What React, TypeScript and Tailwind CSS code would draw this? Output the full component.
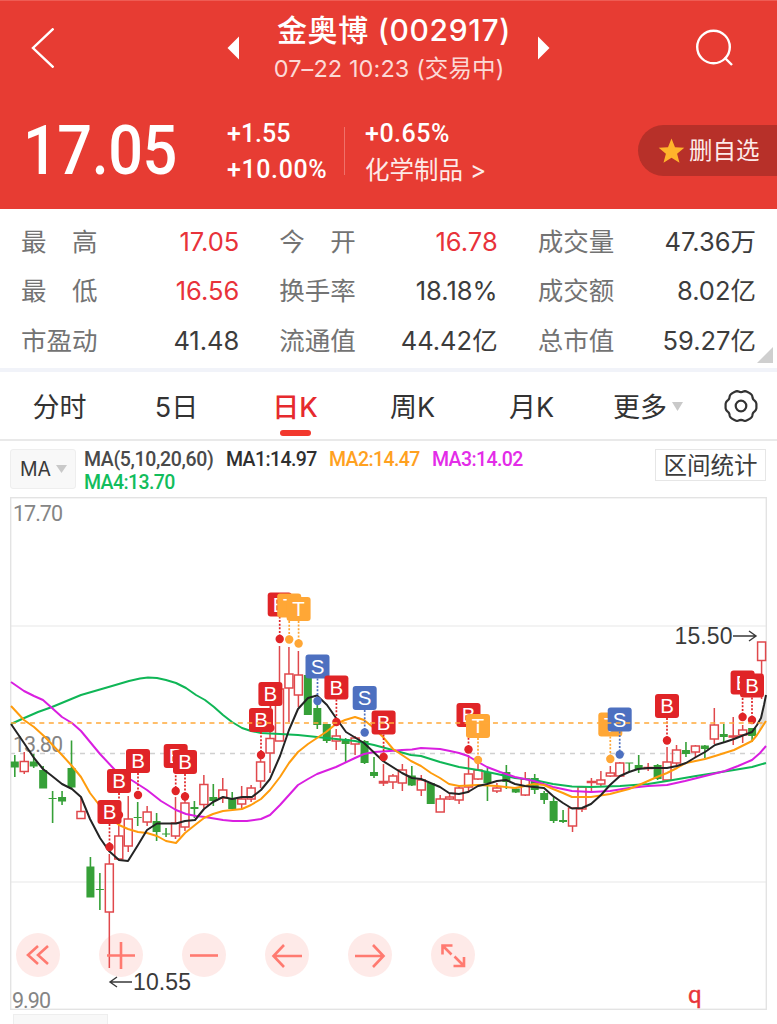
import { type ReactNode } from "react";

type Candle = [color: "r" | "g", top: number, bottom: number, high: number, low: number];

const FIRST_X = 14.8;
const STEP = 9.453;

// body top, body bottom, wick top, wick bottom
const candles: Candle[] = [
  ["g", 761.5, 767.5, 755, 777],
  ["r", 761.5, 771.5, 752, 774],
  ["g", 761.5, 766.5, 754, 768],
  ["g", 770, 788.5, 766, 788],
  ["g", 798, 799, 791, 823],
  ["g", 797, 801.5, 791, 805],
  ["g", 768, 787.5, 740.5, 788],
  ["r", 811.5, 818.5, 797, 818],
  ["g", 866.5, 897.5, 857, 897],
  ["g", 889, 890, 873, 910],
  ["r", 864, 912, 854, 968],
  ["r", 836, 859, 820, 859],
  ["r", 819, 846, 796, 852],
  ["g", 817, 818, 802, 826],
  ["r", 812, 822, 806, 826],
  ["g", 821, 832, 813, 841],
  ["g", 833.5, 834.5, 828, 837],
  ["r", 823, 836, 797, 839],
  ["r", 803, 827, 795, 831],
  ["g", 807, 809, 801, 818],
  ["r", 784.5, 804.5, 775, 808],
  ["g", 797, 801, 784, 806],
  ["r", 790, 798, 778, 803],
  ["g", 798, 809, 792, 809],
  ["r", 799, 804, 786, 809],
  ["r", 788, 799, 785, 802],
  ["r", 762, 781, 755, 788],
  ["r", 738.5, 753, 730, 773],
  ["r", 689, 741, 646, 741],
  ["r", 674, 688, 647, 722],
  ["r", 675, 695, 651, 707],
  ["g", 675, 715, 675, 715],
  ["g", 708, 725, 705, 729],
  ["g", 724, 741, 724, 743],
  ["r", 736, 741, 729, 750],
  ["g", 739, 744, 738, 762],
  ["r", 738, 744, 736, 755],
  ["g", 741, 763, 740, 764],
  ["g", 772, 776, 757, 778],
  ["r", 781.5, 783, 764, 786],
  ["r", 776, 782, 774, 789],
  ["r", 770, 783, 764, 791],
  ["g", 775.5, 785.5, 766, 786],
  ["r", 780, 790, 775, 796],
  ["g", 783, 804, 783, 804],
  ["r", 799, 812, 795, 812],
  ["r", 797, 799, 793, 800],
  ["r", 788, 800, 786, 804],
  ["r", 774, 787, 755, 793],
  ["r", 770, 779, 763, 780],
  ["g", 772, 783, 768, 801],
  ["r", 788, 791, 783, 793],
  ["g", 772, 782, 765, 789],
  ["g", 788.5, 792.5, 787, 793],
  ["r", 779, 795, 772, 796],
  ["g", 778, 790, 774, 794],
  ["g", 793, 800, 791, 804],
  ["g", 801, 821, 797, 823],
  ["g", 820, 822, 810, 823],
  ["r", 808, 826, 808, 832],
  ["r", 787, 809, 787, 812],
  ["r", 781.5, 782.5, 778, 791],
  ["r", 780, 784, 771, 786],
  ["r", 773, 776, 766, 777],
  ["r", 763, 776, 762, 776],
  ["g", 762.5, 763.5, 763, 772],
  ["g", 765, 769, 755, 773],
  ["r", 767.5, 768.5, 763, 771],
  ["g", 765, 779, 764, 780],
  ["r", 762, 780, 747, 780],
  ["r", 750, 763, 745, 766],
  ["g", 750, 754, 742, 757],
  ["r", 746, 752, 745, 757],
  ["g", 745.5, 749, 745, 758],
  ["r", 725, 739, 708, 744],
  ["g", 734, 737, 724, 743],
  ["r", 736, 737, 717, 745],
  ["r", 730, 735, 725, 743],
  ["g", 728, 736, 728, 742],
  ["r", 642, 660.5, 642, 699],
];

const averages = [
  {
    color: "#0fb656",
    points:
      "11,724 22,719 38,712 52,707 81,695 112,686 129,681 140,678.5 148,677.5 157,678 166,680 176,683 186,688 196,695 205,700 214,707 223,715 232,722 242,728 251,731 261,733 280,734 298,735 317,737 336,739 355,741 374,745 400,752 411,755 421,756 440,762 459,767 478,770 497,774 515,778 534,780 553,784 572,786.5 591,787 620,786 648,784 667,781 696,776 715,773 734,770 752,767 766,763",
  },
  {
    color: "#d91fe0",
    points:
      "11,682 24,691 34,696 43,700 52,708 62,717 72,723 81,731 100,754 115,770 133,781 147,790 161,801 176,810 186,814 196,816 205,817 223,820 233,821 247,821 261,819 270,815 280,805 289,795 298,785 308,779 317,774 336,767 355,758 364,754 374,752 390,751 402,750 412,749.5 421,748 440,749 450,751 459,753 468,756 478,762 487,767 500,772 515,777 534,781 553,787 572,791 591,792 610,791 629,788 648,786 667,785 685,781 705,776 725,771 738,766 752,760 760,753 766,746",
  },
  {
    color: "#ff9c0d",
    points:
      "11,706 24,720 34,727 45,737 62,755 72,766 81,777 90,793 100,806 109,817 119,825 128,829 138,832 147,833 157,836 166,841 176,843 185,833 195,825 204,818 213,814 223,811 242,809 251,805 261,799 270,790 280,777 289,763 298,752 308,744 317,738 326,732 336,724 345,720 355,717 364,720 374,728 383,737 393,749 411,761 421,766 431,773 440,778 449,784 459,786 478,785 497,786 515,788 525,786 534,784 544,785 553,789 563,793 572,797 591,797 610,794 629,789 639,785 648,781 657,777 667,773 677,768 686,763 705,759 715,756 734,750 744,745 752,741 757,735 766,721",
  },
  {
    color: "#242424",
    points:
      "11,724 24,743 34,758 43,769 52,776 62,784 72,789 81,797 90,819 100,838 109,851 119,860 128,861 138,845 147,830 157,823.5 176,823.5 185,821 195,820 204,809 213,802 223,797 232,799 242,797 252,797 261,790 270,779 280,756 289,730 298,709 308,698 317,695.5 327,705 336,718 346,732 364,743 383,761 402,773 412,778 421,779 440,787 449,793 459,794 468,792 478,786 487,784 497,781 506,780 515,784 525,786 534,787 544,788 553,796 563,803 572,808.5 582,808 591,804 601,795 610,785 620,776 629,772 638,769 648,768 667,768 677,766 686,763 696,757 705,752 715,745 725,742 734,739 744,735 752,732 757,725 761,718 764,705 766,695",
  },
];

// letter, badge centre, y of the dot
const marks: [string, number, number, number][] = [
  ["B", 119, 781, 815],
  ["B", 109.5, 812, 847],
  ["B", 138, 761, 795],
  ["B", 175.7, 756, 791],
  ["B", 185, 762, 796.5],
  ["B", 270.4, 694, 728],
  ["B", 261, 720, 755],
  ["B", 279.7, 604.5, 639],
  ["T", 289.2, 605.5, 639.5],
  ["T", 298.6, 609, 643.5],
  ["S", 317.5, 666.5, 701],
  ["B", 336.4, 687.5, 722],
  ["S", 364.7, 698, 732.5],
  ["B", 383.6, 722.5, 757],
  ["B", 468.5, 715, 749.5],
  ["T", 478, 726, 760],
  ["T", 610.3, 724.5, 759],
  ["S", 619.7, 719.5, 754.5],
  ["B", 667, 706, 740.5],
  ["B", 742.6, 682.5, 717],
  ["B", 752, 685.5, 720],
];

const markColor: Record<string, string> = { B: "#e02427", T: "#ffa736", S: "#4d70c0" };

const quotes = [
  ["最　高", "17.05", "up"],
  ["今　开", "16.78", "up"],
  ["成交量", "47.36万", ""],
  ["最　低", "16.56", "up"],
  ["换手率", "18.18%", ""],
  ["成交额", "8.02亿", ""],
  ["市盈动", "41.48", ""],
  ["流通值", "44.42亿", ""],
  ["总市值", "59.27亿", ""],
];

// six-lobed outline of the settings icon
const gearPoints = Array.from({ length: 72 }, (_, i) => {
  const angle = (i * Math.PI) / 36;
  const r = 15 + 0.75 * Math.cos(angle * 6) - 0.35 * Math.cos(angle * 12);
  return `${(17 + r * Math.cos(angle)).toFixed(2)},${(17 + r * Math.sin(angle)).toFixed(2)}`;
}).join(" ");

const Header = () => (
  <header className="h-[209px] bg-[#e73c33] border-t border-[#ee5c54] text-white">
    <div className="flex h-[93px] items-center">
      <svg className="ml-[30px] w-6 h-10 shrink-0" viewBox="0 0 24 40" fill="none" stroke="white" strokeWidth="2.4">
        <path d="M23.5 0.5 3 20 23.5 39.5" />
      </svg>
      <svg className="ml-[173px] w-3 h-6 shrink-0" viewBox="0 0 12 24" fill="white">
        <path d="M12 0.5v23L0.5 12z" />
      </svg>
      <div className="ml-[10px] w-[290px] shrink-0 flex flex-col items-center whitespace-nowrap pt-[2px]">
        <div className="text-[30px] leading-[40px] font-medium tracking-[0.7px]">金奥博 (002917)</div>
        <div className="mr-[10px] text-[23.5px] leading-[38px] tracking-[0.1px] text-[#fcd9d6]">07–22 10:23 (交易中)</div>
      </div>
      <svg className="-ml-[1px] w-3 h-6 shrink-0" viewBox="0 0 12 24" fill="white">
        <path d="M0 0.5v23L11.5 12z" />
      </svg>
      <svg className="ml-[145px] w-10 h-10 shrink-0" viewBox="0 0 40 40" fill="none" stroke="white" strokeWidth="2.4">
        <circle cx="18.5" cy="19" r="16.3" />
        <path d="M29.5 29.5 37 37" />
      </svg>
    </div>
    <div className="flex h-[113px] items-center whitespace-nowrap">
      <div className="pl-[23px] w-[227px] font-[Roboto] font-medium text-[68px] leading-[80px]">
        <span className="inline-block origin-left scale-x-[0.9] tracking-[-0.5px]">17.05</span>
      </div>
      <div className="w-[117px] pt-[2px] text-[25px] leading-[36px] font-[Roboto] font-medium">
        <div>+1.55</div>
        <div className="tracking-[0.6px]">+10.00%</div>
      </div>
      <div className="h-12 w-px bg-[#f0716a]" />
      <div className="ml-5 w-[273px] pt-[2px] leading-[36px]">
        <div className="font-[Roboto] font-medium text-[25px] tracking-[0.5px]">+0.65%</div>
        <div className="text-[24.5px] text-[#fdeae8]">化学制品 &gt;</div>
      </div>
      <div className="flex h-[51px] flex-1 items-center rounded-l-full bg-[#b73029] pl-5">
        <svg className="w-[27px] h-[26px] shrink-0" viewBox="0 0 27 26" fill="#ffb42b">
          <path d="M13.5 0.5 17 9.2l9.3.5-7.2 6 2.4 9.1-8-5.1-8 5.1 2.4-9.1-7.2-6 9.3-.5z" />
        </svg>
        <span className="ml-1 text-[23.5px] text-[#fdebe9]">删自选</span>
      </div>
    </div>
  </header>
);

const Quotes = () => (
  <section className="relative h-[159px] bg-white px-[21px] pt-2">
    <div className="grid grid-cols-3 gap-x-[40px] text-[25.5px] whitespace-nowrap">
      {quotes.map(([label, value, kind]) => (
        <div key={label} className="flex h-[49.5px] items-center justify-between">
          <span className="text-[#737373]">{label}</span>
          <span className={kind === "up" ? "text-[#e8323a]" : "text-[#3c3c3c]"}>{value}</span>
        </div>
      ))}
    </div>
    <svg className="absolute right-1 bottom-[5px] w-4 h-4" viewBox="0 0 16 16" fill="#cfcfcf">
      <path d="M16 0v16H0z" />
    </svg>
  </section>
);

const Tab = ({ children, active }: { children: ReactNode; active?: boolean }) => (
  <div className={`relative flex h-full items-center justify-center ${active ? "font-medium text-[#e62a2e]" : ""}`}>
    {children}
    {active && <span className="absolute -bottom-[1px] h-[6px] w-[31px] rounded-full bg-[#f2382d]" />}
  </div>
);

const Tabs = () => (
  <nav className="h-[73px] border-t-4 border-[#f1f3f9]">
    <div className="grid h-[69px] grid-cols-[119px_115px_122px_113px_125px_110px_1fr] border-b-2 border-[#e9e9e9] pb-1 pt-[10px] text-[27px] text-[#333] whitespace-nowrap">
      <Tab>分时</Tab>
      <Tab>5日</Tab>
      <Tab active>日K</Tab>
      <Tab>周K</Tab>
      <Tab>月K</Tab>
      <div className="flex items-center pl-[19px]">
        更多
        <svg className="ml-[5px] mb-1 w-[11px] h-[9px]" viewBox="0 0 11 9" fill="#c9c9c9">
          <path d="M0 0h11L5.500 9z" />
        </svg>
      </div>
      <svg className="ml-[20px] mt-[7px] w-[34px] h-[34px] self-start" viewBox="0 0 34 34" fill="none" stroke="#333" strokeWidth="2.2">
        <polygon points={gearPoints} strokeLinejoin="round" />
        <circle cx="17" cy="17" r="5.300" />
      </svg>
    </div>
  </nav>
);

const Legend = () => (
  <div className="flex h-[56px] items-start px-[10px] pt-2 whitespace-nowrap">
    <div className="flex h-10 w-[66px] items-center rounded-[3px] border border-[#eee] bg-[#f8f8f8] pl-[9px] pt-[2px] text-[19.5px] text-[#3a3a3a]">
      MA
      <svg className="ml-[5px] mb-[2px] w-[11px] h-[8px]" viewBox="0 0 11 8" fill="#c9c9c9">
        <path d="M0 0h11L5.500 8z" />
      </svg>
    </div>
    <div className="ml-2 -mt-px w-[560px] font-[Roboto] font-medium text-[19.5px] leading-[23px] tracking-[-0.35px]">
      <div className="flex">
        <span className="w-[142px] text-[#4a4a4a]">MA(5,10,20,60)</span>
        <span className="w-[103px] tracking-[-0.6px] text-[#2f2f2f]">MA1:14.97</span>
        <span className="w-[103px] tracking-[-0.6px] text-[#ffa11f]">MA2:14.47</span>
        <span className="tracking-[-0.6px] text-[#e32ce8]">MA3:14.02</span>
      </div>
      <div className="tracking-[-0.6px] text-[#12bd5c]">MA4:13.70</div>
    </div>
    <div className="ml-auto mr-px flex h-8 w-[111px] items-center justify-center border border-[#e6e6e6] pt-[2px] text-[23.5px] text-[#3c3c3c]">
      区间统计
    </div>
  </div>
);

const Chart = () => (
  <svg className="block w-[757px] h-[513px] overflow-visible" viewBox="10 497 757 513" fill="none">
    <path d="M10 626h757M10 882h757" stroke="#f0f0f0" strokeWidth="1.500" />
    <path d="M10 753.500h757" stroke="#d0d0d0" strokeWidth="1.500" strokeDasharray="5 5" />
    <rect x="10.700" y="497.700" width="755.600" height="511.600" stroke="#e3e3e3" strokeWidth="1.400" />
    <path d="M766 695v28l-8 10 5-23z" fill="#ddd" />
    <g className="font-[Roboto]" fill="#858585" fontSize="21.500">
      <text x="13" y="521" textLength="50">17.70</text>
      <text x="13" y="752" textLength="50">13.80</text>
      <text x="12" y="1007.500" textLength="39">9.90</text>
    </g>
    {candles.map(([color, top, bottom, high, low], i) => {
      const x = FIRST_X + i * STEP;
      const height = Math.max(bottom - top, 1);
      if (color === "g") {
        return (
          <g key={i} fill="#36a038">
            <rect x={x - 0.8} y={high} width="1.600" height={low - high} />
            <rect x={x - 4} y={top} width="8" height={height} />
          </g>
        );
      }
      return (
        <g key={i} stroke="#e0484c" strokeWidth="1.500">
          <path d={`M${x} ${high}V${top}M${x} ${bottom}V${low}`} />
          <rect x={x - 4} y={top} width="8" height={height} />
        </g>
      );
    })}
    {averages.map((line) => (
      <polyline key={line.color} points={line.points} stroke={line.color} strokeWidth="2" strokeLinejoin="round" />
    ))}
    {marks.map(([letter, x, y, dotY]) => (
      <g key={`${letter}${x}`}>
        <path d={`M${x} ${y + 12}V${dotY}`} stroke={markColor[letter]} strokeWidth="1.700" strokeDasharray="2 1.600" />
        <circle cx={x} cy={dotY} r="4.200" fill={markColor[letter]} />
        <rect x={x - 12} y={y - 12} width="24" height="24" rx="3" fill={markColor[letter]} />
        <text x={x} y={y + 7.300} fill="white" fontSize="20.500" textAnchor="middle" className="font-['Liberation_Sans']">
          {letter}
        </text>
      </g>
    ))}
    <path d="M11 723h755" stroke="#ffa93a" strokeWidth="1.700" strokeDasharray="5 4.450" />
    <g stroke="#3a3a3a" strokeWidth="1.400">
      <path d="M733 636h23M749 631l7 5-7 5" />
      <path d="M132 982h-22M117 977l-7 5 7 5" />
    </g>
    <g fill="#3a3a3a" fontSize="23" className="font-['Liberation_Sans']">
      <text x="674.500" y="644" textLength="58">15.50</text>
      <text x="133" y="990" textLength="58">10.55</text>
    </g>
    <text x="688" y="1003" fill="#e8353a" stroke="#e8353a" strokeWidth="0.400" fontSize="24" className="font-[Roboto]">q</text>
  </svg>
);

const tools = [
  "M22 13 12 22 22 31M32 13 22 22 32 31",
  "M8 22.500H36M22 9V36",
  "M8 22.500H36",
  "M37 23H9M19 12 8.500 23 19 34",
  "M7 23H35M25 12 35.500 23 25 34",
  "M11.500 21.500V12.500H21.500M12 13 20.500 21.500M33 24V33H22.500M32.500 32.500 23.500 23.500",
];

const Toolbar = () => (
  <div className="absolute left-[6px] top-[436px] flex gap-[39px]">
    {tools.map((d) => (
      <button key={d} className="flex size-11 items-center justify-center rounded-full bg-[#fb5b4f]/13">
        <svg className="size-11" viewBox="0 0 44 44" fill="none" stroke="#ff7a70" strokeWidth="2.600">
          <path d={d} />
        </svg>
      </button>
    ))}
  </div>
);

export default function App() {
  return (
    <div className="h-[1024px] w-[777px] overflow-hidden bg-white font-[Inter,'Noto_Sans_CJK_SC',sans-serif]">
      <Header />
      <Quotes />
      <Tabs />
      <Legend />
      <div className="relative mx-[10px]">
        <Chart />
        <Toolbar />
      </div>
      <div className="ml-[13px] mt-1 h-4 w-[95px] border border-[#eee] bg-[#f8f8f8]" />
    </div>
  );
}
